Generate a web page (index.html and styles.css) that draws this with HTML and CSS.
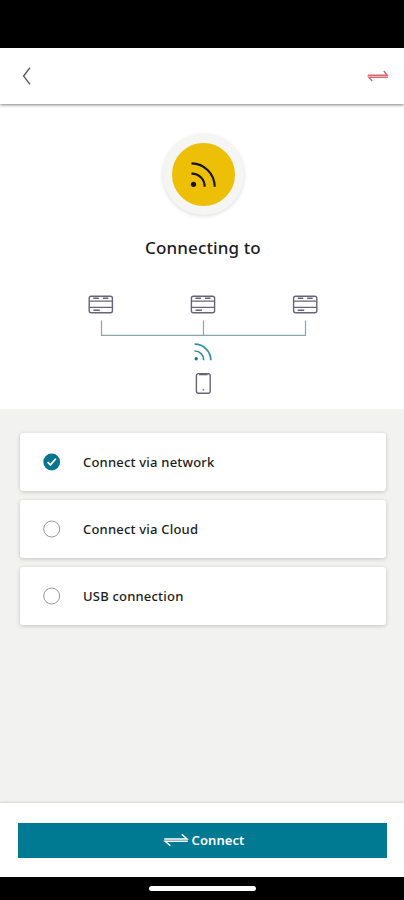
FILE: index.html
```
<!DOCTYPE html>
<html lang="en">
<head>
<meta charset="utf-8">
<meta name="viewport" content="width=device-width">
<title>Connect</title>
<link rel="stylesheet" href="styles.css">
</head>
<body>
<div class="status-bar"></div>
<header class="header">
  <svg class="back" width="10" height="20" viewBox="0 0 10 20"><path d="M8 1.7L1.6 10.1L8 18.4"/></svg>
  <svg class="swap" width="22" height="14" viewBox="0 0 22 14"><path d="M.8 6.2H20.2L16.8 2M21 8.2H1.6L5.2 12"/></svg>
</header>
<main>
  <section class="hero">
    <div class="badge">
      <svg width="63" height="63" viewBox="0 0 63 63"><circle cx="21.5" cy="41.3" r="2.6"/><path d="M19.5 30.6A12.8 12.8 0 0 1 32.6 43.7M19.5 20.4A23.4 23.4 0 0 1 42.7 43.7"/></svg>
    </div>
    <h1>Connecting to</h1>
    <svg class="topology" width="234" height="106" viewBox="86 290 234 106">
      <defs>
        <g id="device">
          <rect x="-11.6" y="-8.3" width="23.2" height="16.6" rx="2"/>
          <path d="M-11.6 -3.4H11.6M-11.6 2.9H11.6M-7.5 -6.2H-2M2 -6.2H7.5M-7.5 5.7H-1"/>
        </g>
      </defs>
      <g class="outline">
        <use href="#device" x="100.8" y="304.5"/>
        <use href="#device" x="203" y="304.5"/>
        <use href="#device" x="305.2" y="304.5"/>
        <rect x="196.4" y="373.6" width="13.8" height="19.6" rx="2.2"/>
        <path class="speaker" d="M199 374.3H207.6"/>
        <circle class="home" cx="203.3" cy="389.8" r="1"/>
      </g>
      <path class="wire" d="M101.5 320.5V335.3H305.5V320.5M203.5 320.5V335"/>
      <circle class="dot" cx="196.2" cy="358.8" r="1.7"/>
      <path class="wave" d="M194.6 351A9 9 0 0 1 203.8 360.2M194.6 344.2A16 16 0 0 1 210.8 360.2"/>
    </svg>
  </section>
  <section class="options">
    <div class="option">
      <svg width="18" height="18" viewBox="0 0 18 18"><circle class="checked" cx="8.7" cy="9" r="8.4"/><path class="tick" d="M4.6 9.2L7.4 11.9L12.8 5.8"/></svg>
      <span>Connect via network</span>
    </div>
    <div class="option">
      <svg width="18" height="18" viewBox="0 0 18 18"><circle class="ring" cx="8.7" cy="9" r="8"/></svg>
      <span>Connect via Cloud</span>
    </div>
    <div class="option">
      <svg width="18" height="18" viewBox="0 0 18 18"><circle class="ring" cx="8.7" cy="9" r="8"/></svg>
      <span>USB connection</span>
    </div>
  </section>
</main>
<footer class="footer">
  <button class="connect">
    <svg width="26" height="16" viewBox="0 0 26 16"><path d="M1.2 6.9H24L18.8 2.3M24.8 9.3H2.2L7.4 13.7"/></svg>
    <span>Connect</span>
  </button>
</footer>
<div class="nav-bar"><div class="handle"></div></div>
</body>
</html>
```
FILE: styles.css
```
* { box-sizing: border-box; }
body {
  margin: 0;
  height: 900px;
  display: flex;
  flex-direction: column;
  background: #fff;
  color: #1c1c22;
  font-family: "Noto Sans", sans-serif;
  overflow: hidden;
}
svg { display: block; flex: none; fill: none; }
.status-bar { height: 48px; background: #000; flex: none; }
.header {
  height: 56px;
  flex: none;
  display: flex;
  align-items: center;
  justify-content: space-between;
  padding: 0 15px 0 22px;
  box-shadow: 0 1px 3px rgba(0, 0, 0, .5);
}
.back { stroke: #55555a; stroke-width: 1.4; }
.swap { stroke: #dc6570; stroke-width: 1.4; }
main { flex: 1; display: flex; flex-direction: column; }
.hero {
  height: 305px;
  flex: none;
  padding: 30px 0 0 2px;
  display: flex;
  flex-direction: column;
  align-items: center;
}
.badge {
  width: 81px;
  height: 81px;
  border: 9px solid #f5f5f4;
  border-radius: 50%;
  background: #edbf07;
  box-shadow: 0 1px 4px rgba(0, 0, 0, .14);
}
.badge circle { fill: #17150c; }
.badge path { stroke: #17150c; stroke-width: 2.1; }
h1 {
  margin: 21px 0 0;
  font-size: 17px;
  line-height: 24px;
  font-weight: 500;
  letter-spacing: .12px;
}
.topology { margin-top: 30px; }
.outline { stroke: #67647a; stroke-width: 1.4; }
.speaker { stroke-width: 2; }
.home { fill: #8d8a9c; stroke: none; }
.wire { stroke: #8ba7aa; stroke-width: 1.2; }
.dot { fill: #17758e; }
.wave { stroke: #348ea5; stroke-width: 1.7; }
.options {
  flex: 1;
  background: #f2f2f0;
  padding: 24px 18px 0 20px;
  display: flex;
  flex-direction: column;
  gap: 9px;
}
.option {
  height: 58px;
  display: flex;
  align-items: center;
  gap: 22px;
  padding-left: 23px;
  background: #fff;
  border-radius: 3px;
  box-shadow: 0 1px 4px rgba(0, 0, 0, .2);
  font-size: 13px;
  font-weight: 500;
  letter-spacing: .2px;
}
.checked { fill: #08758e; }
.tick { stroke: #fff; stroke-width: 1.7; }
.ring { stroke: #96969e; stroke-width: 1; }
.footer {
  height: 74px;
  flex: none;
  padding: 20px 17px 0 18px;
  box-shadow: 0 -1px 2px rgba(0, 0, 0, .12);
}
.connect {
  width: 100%;
  height: 35px;
  border: 0;
  padding: 0 0 2px 3px;
  display: flex;
  align-items: center;
  justify-content: center;
  gap: 2px;
  background: #007a93;
  color: #fff;
  font: 600 13px "Noto Sans", sans-serif;
  letter-spacing: .1px;
}
.connect path { stroke: #fff; stroke-width: 1.5; }
.nav-bar {
  height: 23px;
  flex: none;
  padding-top: 9px;
  background: #000;
}
.handle {
  width: 107px;
  height: 5px;
  margin: 0 auto;
  border-radius: 3px;
  background: #fff;
}
```
